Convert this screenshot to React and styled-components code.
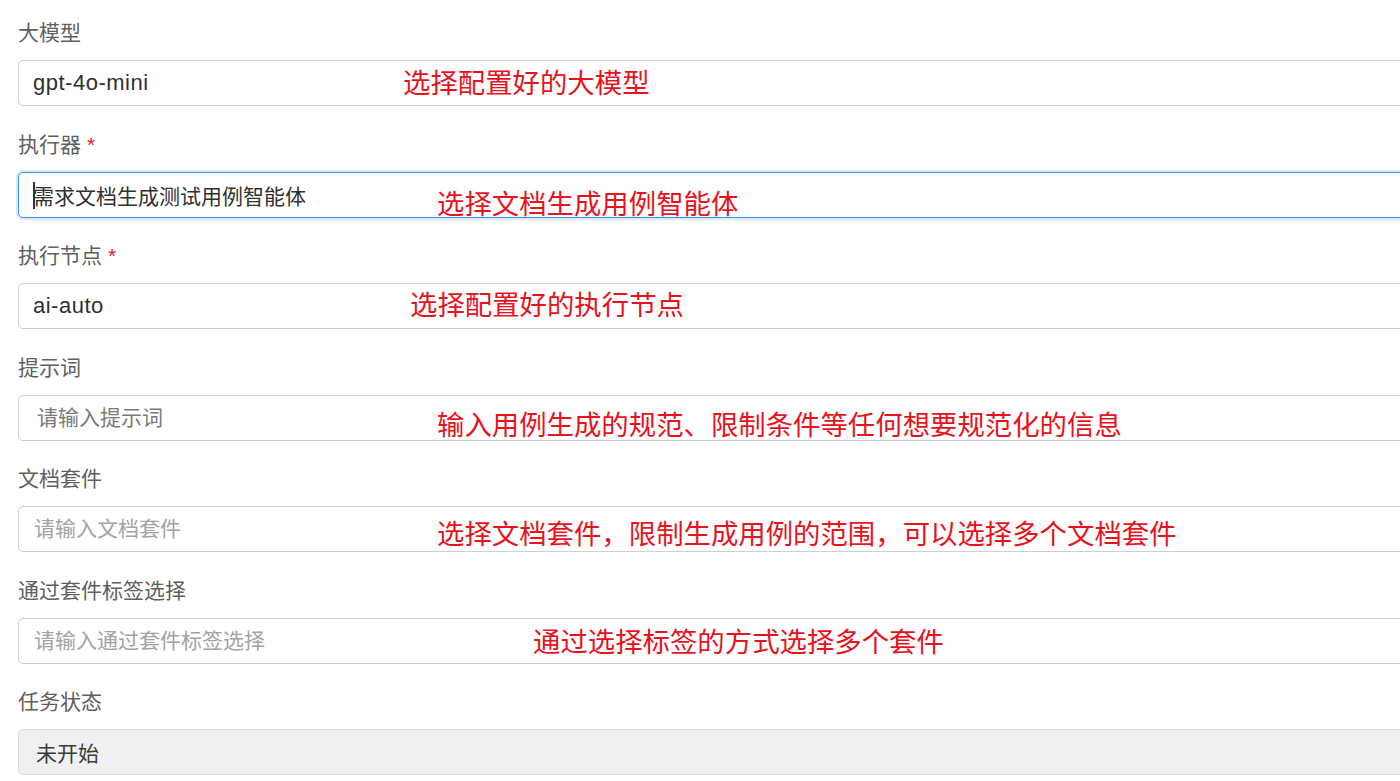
import React from "react";
import styled, { createGlobalStyle, css } from "styled-components";

const GlobalStyle = createGlobalStyle`
  html, body {
    margin: 0;
    padding: 0;
    background: #ffffff;
    overflow: hidden;
  }
  body {
    font-family: "Liberation Sans", "Noto Sans CJK SC", sans-serif;
  }
`;

const Page = styled.div`
  width: 1400px;
  height: 781px;
  overflow: hidden;
  padding: 18px 0 0 18px;
  box-sizing: border-box;
`;

const Form = styled.form`
  display: flex;
  flex-direction: column;
  width: 1420px;
`;

const Field = styled.div`
  display: flex;
  flex-direction: column;
  margin-bottom: 23.5px;
`;

const Label = styled.label`
  height: 30px;
  line-height: 30px;
  margin-bottom: 12px;
  font-size: 21px;
  color: #5f5f5f;
  span {
    color: #e0201b;
    margin-left: 6px;
  }
`;

const Control = styled.div`
  position: relative;
  height: 46px;
`;

const Input = styled.input`
  box-sizing: border-box;
  width: 100%;
  height: 46px;
  padding: 0 0 0 ${(p) => p.$pad || 14}px;
  border: 1px solid #cfcfcf;
  border-radius: 5px;
  background: #ffffff;
  font-family: "Liberation Sans", "Noto Sans CJK SC", sans-serif;
  font-size: 21px;
  color: #303030;
  outline: none;
  ${(p) =>
    p.$latin &&
    css`
      font-size: 22px;
      letter-spacing: 0.5px;
    `}
  &::placeholder {
    color: ${(p) => p.$hint || "#a3a3a3"};
  }
  ${(p) =>
    p.$focused &&
    css`
      border-color: #3f8fe0;
      box-shadow: 0 0 0 2px #dbeafb;
    `}
  &:disabled {
    background: #f0f0f0;
    border-color: #dcdcdc;
    color: #3a3a3a;
  }
`;

const Caret = styled.i`
  position: absolute;
  left: 15px;
  top: 10px;
  width: 1.5px;
  height: 27px;
  background: #333;
`;

const Note = styled.div`
  position: absolute;
  left: ${(p) => p.$left}px;
  top: ${(p) => p.$top}px;
  font-family: "Noto Sans CJK SC", sans-serif;
  font-size: 27.4px;
  line-height: 27px;
  color: #e8121c;
  white-space: nowrap;
  pointer-events: none;
`;

const fields = [
  { label: "大模型", value: "gpt-4o-mini", latin: true, note: "选择配置好的大模型", left: 385, top: 8 },
  {
    label: "执行器",
    required: true,
    value: "需求文档生成测试用例智能体",
    focused: true,
    note: "选择文档生成用例智能体",
    left: 419,
    top: 17,
  },
  {
    label: "执行节点",
    required: true,
    value: "ai-auto",
    latin: true,
    note: "选择配置好的执行节点",
    left: 392,
    top: 7,
  },
  {
    label: "提示词",
    placeholder: "请输入提示词",
    pad: 18,
    hint: "#7a7a7a",
    note: "输入用例生成的规范、限制条件等任何想要规范化的信息",
    left: 419,
    top: 15,
  },
  {
    label: "文档套件",
    placeholder: "请输入文档套件",
    pad: 15,
    note: "选择文档套件，限制生成用例的范围，可以选择多个文档套件",
    left: 419,
    top: 13,
  },
  {
    label: "通过套件标签选择",
    placeholder: "请输入通过套件标签选择",
    pad: 15,
    note: "通过选择标签的方式选择多个套件",
    left: 515,
    top: 9,
  },
  { label: "任务状态", value: "未开始", disabled: true, pad: 17 },
];

export default function App() {
  return (
    <>
      <GlobalStyle />
      <Page>
        <Form onSubmit={(e) => e.preventDefault()}>
          {fields.map((f) => (
            <Field key={f.label}>
              <Label>
                {f.label}
                {f.required && <span>*</span>}
              </Label>
              <Control>
                <Input
                  readOnly
                  value={f.value || ""}
                  placeholder={f.placeholder}
                  disabled={f.disabled}
                  $pad={f.pad}
                  $hint={f.hint}
                  $latin={f.latin}
                  $focused={f.focused}
                />
                {f.focused && <Caret />}
                {f.note && (
                  <Note $left={f.left} $top={f.top}>
                    {f.note}
                  </Note>
                )}
              </Control>
            </Field>
          ))}
        </Form>
      </Page>
    </>
  );
}
